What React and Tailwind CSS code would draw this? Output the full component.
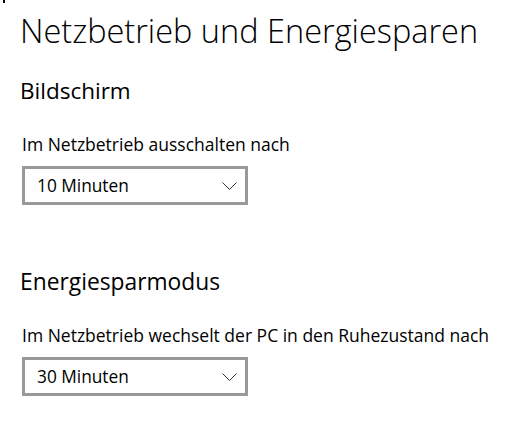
const font = { fontFamily: '"Segoe UI", "Open Sans", "Noto Sans", sans-serif' };

function Dropdown({ value }) {
  return (
    <div className="ml-[2px] flex h-[39px] w-[226px] items-center justify-between border-[3px] border-[#999999] bg-white pl-[12px] pr-[8px]">
      <span className="text-[17.3px] leading-[22px] text-black">{value}</span>
      <svg width="15" height="9" viewBox="0 0 15 9" className="mt-[1px]">
        <polyline points="0.5,0.5 7.5,7.5 14.5,0.5" fill="none" stroke="#333" strokeWidth="1" />
      </svg>
    </div>
  );
}

export default function App() {
  return (
    <div className="relative h-[425px] w-[531px] overflow-hidden bg-white" style={font}>
      <div className="absolute left-[3px] top-0 h-[3px] w-[2px] bg-black" />
      <div className="pl-[20px] pt-[9px]">
        <h1 className="text-[32.5px] font-light leading-[44px] text-black">Netzbetrieb und Energiesparen</h1>
        <h2 className="mt-[25px] text-[22.5px] leading-[26px] text-black">Bildschirm</h2>
        <p className="ml-[2px] mt-[30px] text-[17.5px] leading-[20px] text-black">Im Netzbetrieb ausschalten nach</p>
        <div className="mt-[12px]">
          <Dropdown value="10 Minuten" />
        </div>
        <h2 className="mt-[64px] text-[22.8px] leading-[26px] text-black">Energiesparmodus</h2>
        <p className="ml-[2px] mt-[30px] text-[17.5px] leading-[20px] text-black">Im Netzbetrieb wechselt der PC in den Ruhezustand nach</p>
        <div className="mt-[12px]">
          <Dropdown value="30 Minuten" />
        </div>
      </div>
    </div>
  );
}
